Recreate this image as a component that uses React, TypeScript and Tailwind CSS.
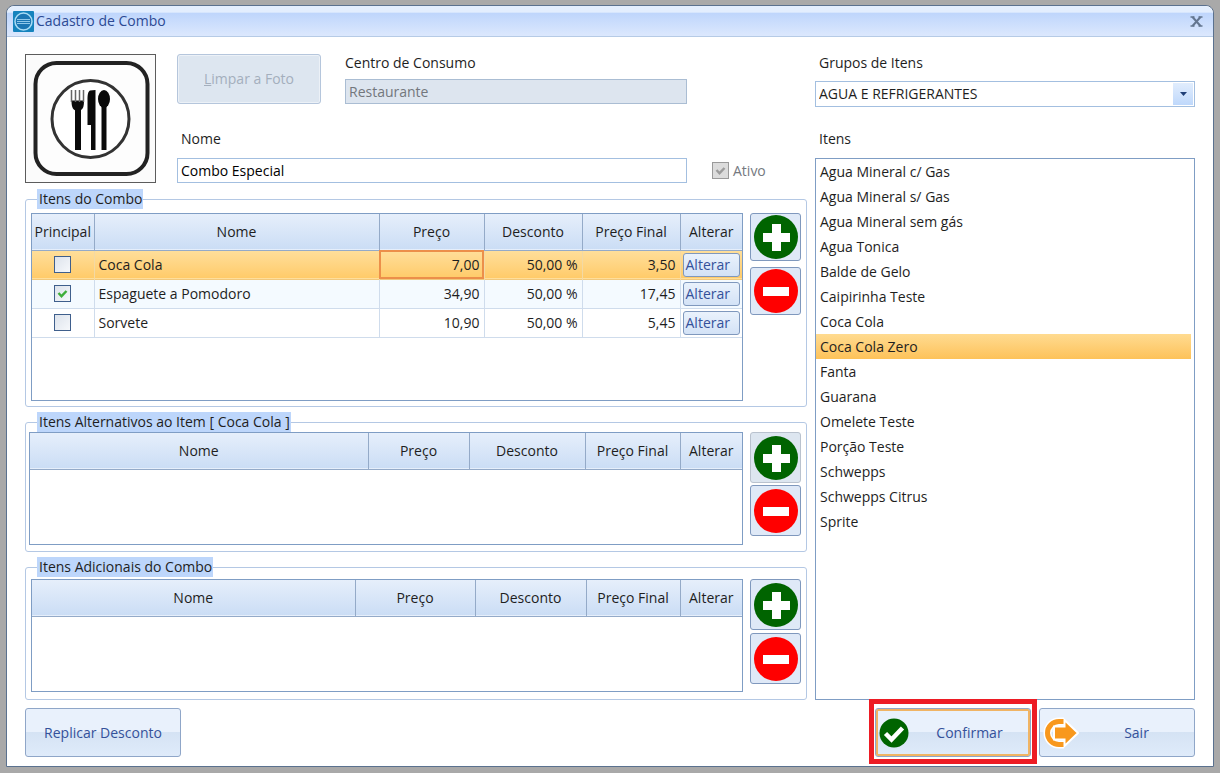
import React from 'react'
import clsx from 'clsx'

type ComboItem = {
  name: string
  price: string
  discount: string
  finalPrice: string
  main: boolean
}

const COMBO_ITEMS: ComboItem[] = [
  { name: 'Coca Cola', price: '7,00', discount: '50,00 %', finalPrice: '3,50', main: false },
  { name: 'Espaguete a Pomodoro', price: '34,90', discount: '50,00 %', finalPrice: '17,45', main: true },
  { name: 'Sorvete', price: '10,90', discount: '50,00 %', finalPrice: '5,45', main: false },
]

const GROUP_ITEMS = [
  'Agua Mineral c/ Gas',
  'Agua Mineral s/ Gas',
  'Agua Mineral sem gás',
  'Agua Tonica',
  'Balde de Gelo',
  'Caipirinha Teste',
  'Coca Cola',
  'Coca Cola Zero',
  'Fanta',
  'Guarana',
  'Omelete Teste',
  'Porção Teste',
  'Schwepps',
  'Schwepps Citrus',
  'Sprite',
]

export default function App() {
  const [selectedRow, setSelectedRow] = React.useState(0)
  const [selectedItem, setSelectedItem] = React.useState('Coca Cola Zero')
  const [items, setItems] = React.useState(COMBO_ITEMS)

  const toggleMain = (index: number) => {
    setItems((current) =>
      current.map((item, i) => (i === index ? { ...item, main: !item.main } : item))
    )
  }

  return (
    <div className="min-h-screen bg-[#a9a9a9] px-[6px] pt-[5px] pb-[6px] font-['Open_Sans',sans-serif] text-sm leading-5 text-[#1e1e1e]">
      <div className="rounded-t-lg border border-[#5a718f] bg-white">
        <TitleBar />

        <main className="px-[18px] pt-[17px] pb-[9px]">
          <div className="grid grid-cols-[782fr_380fr] gap-2">
            <div className="flex flex-col gap-[5px]">
              <ComboForm />

              <Group title="Itens do Combo" className="px-[5px] pt-1 pb-[5px]">
                <div className="min-h-[188px] flex-1 border border-[#7f9dc4]">
                  <table className="w-full table-fixed border-collapse">
                    <colgroup>
                      <col className="w-[62px]" />
                      <col />
                      <col className="w-[105px]" />
                      <col className="w-[98px]" />
                      <col className="w-[98px]" />
                      <col className="w-[62px]" />
                    </colgroup>
                    <TableHead
                      columns={['Principal', 'Nome', 'Preço', 'Desconto', 'Preço Final', 'Alterar']}
                    />
                    <tbody>
                      {items.map((item, index) => {
                        const selected = index === selectedRow
                        return (
                          <tr
                            key={item.name}
                            onClick={() => setSelectedRow(index)}
                            className={clsx(
                              'h-[29px] border-b',
                              selected
                                ? 'border-[#f0c87c] bg-linear-to-b from-[#ffdf9b] to-[#ffcb69]'
                                : 'border-[#cfdcec] odd:bg-white even:bg-[#f4faff]'
                            )}
                          >
                            <td className={cellClass(selected)}>
                              <div className="flex justify-center">
                                <Checkbox
                                  label={`${item.name} principal`}
                                  checked={item.main}
                                  onChange={() => toggleMain(index)}
                                />
                              </div>
                            </td>
                            <td className={clsx(cellClass(selected), 'pl-1')}>{item.name}</td>
                            <td
                              className={clsx(
                                cellClass(selected),
                                'pr-1 text-right',
                                selected && 'outline-2 -outline-offset-2 outline-[#ec8f4a]'
                              )}
                            >
                              {item.price}
                            </td>
                            <td className={clsx(cellClass(selected), 'pr-1 text-right')}>
                              {item.discount}
                            </td>
                            <td className={clsx(cellClass(selected), 'pr-1 text-right')}>
                              {item.finalPrice}
                            </td>
                            <td className="px-[2px]">
                              <button className="block h-6 w-full rounded-[3px] border border-[#7f98bd] bg-linear-to-b from-[#eaf2fc] to-[#d3e2f6] px-[2px] text-left leading-5 text-[#34519a]">
                                Alterar
                              </button>
                            </td>
                          </tr>
                        )
                      })}
                    </tbody>
                  </table>
                </div>
                <GroupButtons className="gap-[6px]" buttonClassName="h-12" />
              </Group>

              <Group title="Itens Alternativos ao Item [ Coca Cola ]" className="pr-[5px] pb-[6px] pl-[3px]">
                <div className="min-h-[113px] flex-1 border border-[#7f9dc4]">
                  <table className="w-full table-fixed border-collapse">
                    <colgroup>
                      <col />
                      <col className="w-[101px]" />
                      <col className="w-[116px]" />
                      <col className="w-[95px]" />
                      <col className="w-[62px]" />
                    </colgroup>
                    <TableHead columns={['Nome', 'Preço', 'Desconto', 'Preço Final', 'Alterar']} />
                  </table>
                </div>
                <GroupButtons className="gap-[2px]" buttonClassName="h-[51px]" addDisabled />
              </Group>

              <Group title="Itens Adicionais do Combo" className="px-[5px] pt-[2px] pb-[7px]">
                <div className="min-h-[113px] flex-1 border border-[#7f9dc4]">
                  <table className="w-full table-fixed border-collapse">
                    <colgroup>
                      <col />
                      <col className="w-[120px]" />
                      <col className="w-[111px]" />
                      <col className="w-[94px]" />
                      <col className="w-[62px]" />
                    </colgroup>
                    <TableHead columns={['Nome', 'Preço', 'Desconto', 'Preço Final', 'Alterar']} />
                  </table>
                </div>
                <GroupButtons className="gap-[3px]" buttonClassName="h-[51px]" />
              </Group>
            </div>

            <div className="flex flex-col">
              <label htmlFor="group" className="pl-1 leading-[18px]">
                Grupos de Itens
              </label>
              <div className="mt-[9px] grid h-[26px] border border-[#a3bfe0]">
                <select
                  id="group"
                  className="col-start-1 row-start-1 appearance-none bg-white pl-[3px]"
                >
                  <option>AGUA E REFRIGERANTES</option>
                </select>
                <span className="pointer-events-none col-start-1 row-start-1 m-px flex w-5 items-center justify-center justify-self-end bg-linear-to-b from-[#e1edfd] to-[#bfd8fb]">
                  <svg width="7" height="4" viewBox="0 0 7 4" aria-hidden>
                    <path d="M0 0h7L3.5 4z" fill="#1f3f77" />
                  </svg>
                </span>
              </div>

              <p id="items-label" className="mt-[22px] pl-1">
                Itens
              </p>
              <ul
                aria-labelledby="items-label"
                className="mt-[9px] flex-1 border border-[#7f9dc4] pr-[3px]"
              >
                {GROUP_ITEMS.map((item) => (
                  <li key={item}>
                    <button
                      onClick={() => setSelectedItem(item)}
                      className={clsx(
                        'block h-[25px] w-full pl-1 text-left',
                        item === selectedItem && 'bg-linear-to-b from-[#ffdb90] to-[#fdc258]'
                      )}
                    >
                      {item}
                    </button>
                  </li>
                ))}
              </ul>
            </div>
          </div>

          <footer className="mt-2 flex gap-2 text-[#34519a]">
            <FooterButton className="mr-auto justify-center">Replicar Desconto</FooterButton>
            <div className="relative">
              <FooterButton className="pl-[3px] ring-2 ring-[#f0b464] ring-inset">
                <CheckIcon />
                <span className="flex-1 text-center">Confirmar</span>
              </FooterButton>
              <span className="pointer-events-none absolute -inset-x-[6px] -top-[9px] -bottom-[7px] border-[5px] border-[#ed1c24]" />
            </div>
            <FooterButton className="pl-[2px]">
              <ExitIcon />
              <span className="flex-1 text-center">Sair</span>
            </FooterButton>
          </footer>
        </main>
      </div>
    </div>
  )
}

const cellClass = (selected: boolean) =>
  clsx('border-r', selected ? 'border-[#f3d9a4]' : 'border-[#cfdcec]')

const TitleBar = () => (
  <header className="flex h-[31px] items-center rounded-t-lg border-b border-[#b6cbe6] bg-linear-to-b from-[#e3eefe] from-20% via-[#bfd6fc] via-25% to-[#dce8fd] pr-[10px] pl-[6px]">
    <svg width="21" height="21" viewBox="0 0 21 21" aria-hidden>
      <rect width="21" height="21" rx="1" fill="#1583bd" />
      <circle cx="10.5" cy="10.5" r="8.5" fill="#1b76b3" stroke="#a9dcf5" strokeWidth="1.5" />
      <path d="M4 8.5h13M4 10.5h13M4 12.5h13" stroke="#8fc8ea" strokeWidth="1" />
    </svg>
    <h1 className="ml-[2px] text-[#2c4a94]">Cadastro de Combo</h1>
    <button aria-label="Fechar" className="ml-auto">
      <svg width="13" height="11" viewBox="0 0 13 11" aria-hidden>
        <path d="M2.5 1l8 9M10.5 1l-8 9" stroke="#63758f" strokeWidth="2" />
        <path d="M.5 1h4M8.5 1h4M.5 10h4M8.5 10h4" stroke="#63758f" strokeWidth="1.5" />
      </svg>
    </button>
  </header>
)

const ComboForm = () => (
  <div className="flex min-h-[130px] gap-[21px]">
    <PlatePhoto />

    <div className="flex-1">
      <div className="flex gap-6">
        <button
          disabled
          className="h-[50px] w-36 rounded-[3px] border border-[#b5c6dc] bg-[#dde6f0] text-[#a4afbd] shadow-[inset_0_0_0_1px_#ecf1f7]"
        >
          <span className="underline">L</span>impar a Foto
        </button>
        <div className="flex flex-1 flex-col pr-[120px]">
          <label htmlFor="center" className="leading-[18px]">
            Centro de Consumo
          </label>
          <input
            id="center"
            disabled
            defaultValue="Restaurante"
            className="mt-[7px] h-[25px] border border-[#aabdd3] bg-[#dde5ef] pl-[3px] text-[#73777d]"
          />
        </div>
      </div>

      <label htmlFor="name" className="mt-[25px] block pl-1">
        Nome
      </label>
      <div className="mt-[9px] flex items-center gap-[25px]">
        <input
          id="name"
          defaultValue="Combo Especial"
          className="h-[25px] min-w-0 flex-1 border border-[#a3bfe0] bg-white pl-[3px] text-black"
        />
        <label className="flex w-[95px] items-center gap-1 text-[#75797f]">
          <Checkbox checked disabled />
          Ativo
        </label>
      </div>
    </div>
  </div>
)

interface GroupProps {
  title: string
  className?: string
  children?: React.ReactNode
}

const Group = ({ title, className, children }: GroupProps) => (
  <fieldset className="rounded-[3px] border border-[#b4c8e4]">
    <legend className="ml-[11px] bg-[#bdd6fb] pr-px pl-[2px]">{title}</legend>
    <div className={clsx('flex gap-[7px]', className)}>{children}</div>
  </fieldset>
)

const TableHead = ({ columns }: { columns: string[] }) => (
  <thead>
    <tr className="h-9 border-b border-[#94aac8] bg-linear-to-b from-[#e6effb] to-[#cbddf5]">
      {columns.map((column) => (
        <th
          key={column}
          scope="col"
          className="border-r border-[#94aac8] font-normal whitespace-nowrap last:border-r-0"
        >
          {column}
        </th>
      ))}
    </tr>
  </thead>
)

interface GroupButtonsProps {
  className?: string
  buttonClassName?: string
  addDisabled?: boolean
}

const GroupButtons = ({ className, buttonClassName, addDisabled }: GroupButtonsProps) => (
  <div className={clsx('flex flex-col', className)}>
    <button
      aria-label="Adicionar item"
      disabled={addDisabled}
      className={clsx(
        'flex w-[51px] items-center justify-center rounded-[3px] border',
        addDisabled ? 'border-[#b9c2ce] bg-[#dde6f0]' : 'border-[#7f98bd] bg-[#dfe9f7]',
        buttonClassName
      )}
    >
      <svg width="44" height="44" viewBox="0 0 44 44" aria-hidden>
        <circle cx="22" cy="22" r="22" fill="#006400" />
        <path d="M18 9h9v9h9v9h-9v9h-9v-9H9v-9h9z" fill="#fff" />
      </svg>
    </button>
    <button
      aria-label="Remover item"
      className={clsx(
        'flex w-[51px] items-center justify-center rounded-[3px] border border-[#7f98bd] bg-[#dfe9f7]',
        buttonClassName
      )}
    >
      <svg width="44" height="44" viewBox="0 0 44 44" aria-hidden>
        <circle cx="22" cy="22" r="22" fill="#ff0000" />
        <path d="M9 18h26v9H9z" fill="#fff" />
      </svg>
    </button>
  </div>
)

interface CheckboxProps {
  label?: string
  checked: boolean
  disabled?: boolean
  onChange?: () => void
}

const Checkbox = ({ label, checked, disabled, onChange }: CheckboxProps) => (
  <span className="grid size-[17px]">
    <input
      type="checkbox"
      aria-label={label}
      checked={checked}
      disabled={disabled}
      onChange={onChange}
      className={clsx(
        'col-start-1 row-start-1 size-[17px] appearance-none border',
        disabled
          ? 'border-[#9a9a9a] bg-[#dcdcdc]'
          : 'border-[#3f5f8c] bg-linear-to-br from-[#dde3ec] to-[#f6f8fb]'
      )}
    />
    {checked && (
      <svg
        viewBox="0 0 17 17"
        className="pointer-events-none col-start-1 row-start-1 size-[17px]"
        aria-hidden
      >
        <path
          d="M4.5 8l3 3.2L12.5 6"
          fill="none"
          stroke={disabled ? '#9c9c9c' : '#3fae3a'}
          strokeWidth="2.4"
        />
      </svg>
    )}
  </span>
)

const FooterButton = ({ className, children }: { className?: string; children: React.ReactNode }) => (
  <button
    className={clsx(
      'flex h-[49px] w-[156px] items-center rounded-[3px] border border-[#8fa6c8] bg-linear-to-b from-[#e9f1fc] from-50% via-[#d5e3f4] via-50% to-[#dfebfa]',
      className
    )}
  >
    {children}
  </button>
)

const CheckIcon = () => (
  <svg width="30" height="30" viewBox="0 0 30 30" aria-hidden>
    <circle cx="15" cy="15" r="14.5" fill="#006400" />
    <path d="M6.5 15.5l6 6L23.5 10" fill="none" stroke="#fff" strokeWidth="4.5" />
  </svg>
)

const ExitIcon = () => (
  <svg width="37" height="32" viewBox="0 0 37 32" aria-hidden>
    <path d="M22 4.5h-5a11.5 11.5 0 0 0 0 23h5" fill="none" stroke="#fff" strokeWidth="8" />
    <path d="M22 4.500h-5a11.500 11.500 0 0 0 0 23h5" fill="none" stroke="#f8981d" strokeWidth="5" />
    <path
      d="M12 9.500h10.500V3L36 16 22.500 29v-6.500H12z"
      fill="#f8981d"
      stroke="#fff"
      strokeWidth="2"
    />
  </svg>
)

const PlatePhoto = () => (
  <svg
    viewBox="0 0 129 127"
    className="h-[129px] w-[131px] border border-[#5c5c5c] bg-[#fbfbfb]"
    role="img"
    aria-label="Foto do combo"
  >
    <rect x="9.500" y="8" width="112" height="111" rx="21" fill="#fdfdfd" stroke="#222" strokeWidth="4" />
    <circle cx="64.500" cy="64" r="38.500" fill="#fff" stroke="#333" strokeWidth="3" />
    <g fill="#0a0a0a">
      <path d="M45.500 45.500h12.500c0 6-1 8.500-3.500 9.800h-5.500c-2.500-1.300-3.500-4-3.500-9.800z" />
      <path d="M49 53h6v42h-6z" />
      <path d="M64 35.500c-2 1-2.500 4-2.500 10V70h3.500v25h4.500V35z" />
      <ellipse cx="78" cy="44" rx="6" ry="9" />
      <path d="M75.500 50h5v45h-5z" />
    </g>
    <path d="M45.500 35v12M49.500 35v12M53.500 35v12M57.500 35v12" stroke="#666" strokeWidth="1.500" />
  </svg>
)
